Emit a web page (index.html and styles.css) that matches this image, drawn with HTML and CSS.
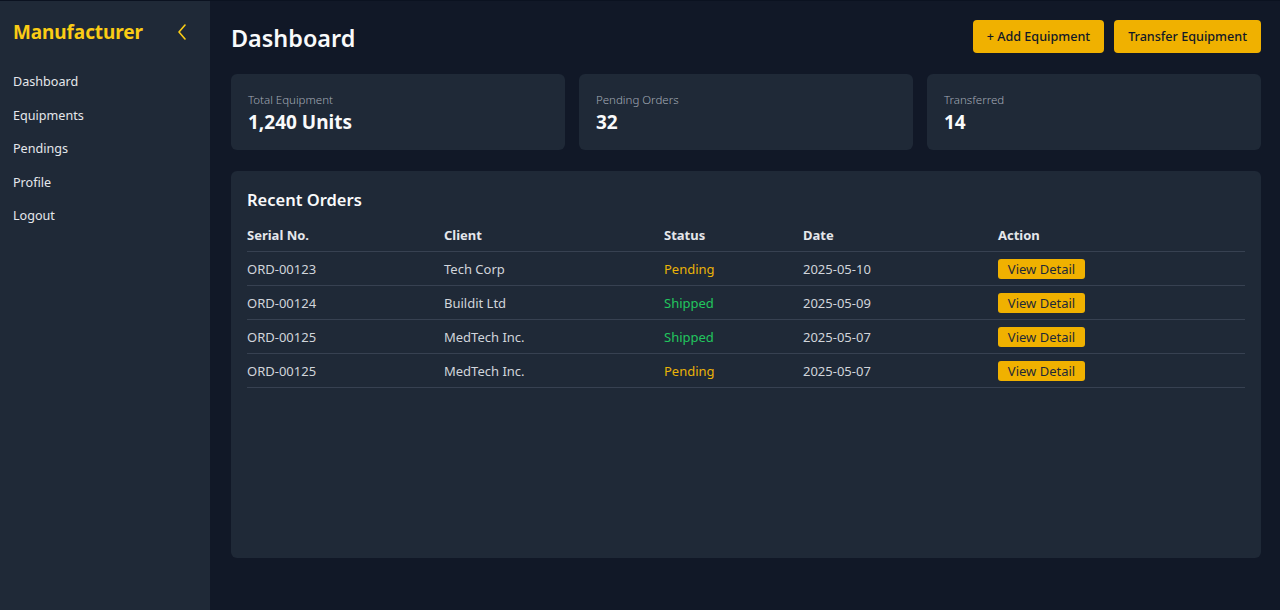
FILE: index.html
```html
<!DOCTYPE html>
<html lang="en">
<head>
<meta charset="utf-8">
<title>Manufacturer Dashboard</title>
<link rel="stylesheet" href="styles.css">
</head>
<body>
<div class="app">
  <aside class="sidebar">
    <div class="brand">
      <span class="brand-name">Manufacturer</span>
      <svg class="collapse" width="10" height="16" viewBox="0 0 10 16" fill="none" stroke="#facc15" stroke-width="1.6" stroke-linecap="round" stroke-linejoin="round"><path d="M8 1 L2 8 L8 15"/></svg>
    </div>
    <nav class="nav">
      <a class="nav-item">Dashboard</a>
      <a class="nav-item">Equipments</a>
      <a class="nav-item">Pendings</a>
      <a class="nav-item">Profile</a>
      <a class="nav-item">Logout</a>
    </nav>
  </aside>
  <main class="main">
    <header class="topbar">
      <h1 class="title">Dashboard</h1>
      <div class="actions">
        <button class="btn">+ Add Equipment</button>
        <button class="btn">Transfer Equipment</button>
      </div>
    </header>
    <section class="stats">
      <div class="card">
        <div class="card-label">Total Equipment</div>
        <div class="card-value">1,240 Units</div>
      </div>
      <div class="card">
        <div class="card-label">Pending Orders</div>
        <div class="card-value">32</div>
      </div>
      <div class="card">
        <div class="card-label">Transferred</div>
        <div class="card-value">14</div>
      </div>
    </section>
    <section class="panel">
      <h2 class="panel-title">Recent Orders</h2>
      <table class="orders">
        <thead>
          <tr><th class="c1">Serial No.</th><th class="c2">Client</th><th class="c3">Status</th><th class="c4">Date</th><th class="c5">Action</th></tr>
        </thead>
        <tbody>
          <tr><td>ORD-00123</td><td>Tech Corp</td><td class="pending">Pending</td><td>2025-05-10</td><td><button class="view">View Detail</button></td></tr>
          <tr><td>ORD-00124</td><td>Buildit Ltd</td><td class="shipped">Shipped</td><td>2025-05-09</td><td><button class="view">View Detail</button></td></tr>
          <tr><td>ORD-00125</td><td>MedTech Inc.</td><td class="shipped">Shipped</td><td>2025-05-07</td><td><button class="view">View Detail</button></td></tr>
          <tr><td>ORD-00125</td><td>MedTech Inc.</td><td class="pending">Pending</td><td>2025-05-07</td><td><button class="view">View Detail</button></td></tr>
        </tbody>
      </table>
    </section>
  </main>
</div>
</body>
</html>
```
FILE: styles.css
```css
* { box-sizing: border-box; }
html, body { margin: 0; padding: 0; height: 100%; }
body {
  font-family: "Noto Sans", "Open Sans", sans-serif;
  background: #111827;
  color: #e5e7eb;
}
.app {
  display: flex;
  height: 610px;
  border-top: 1px solid #0b1220;
}
.sidebar {
  width: 210px;
  flex-shrink: 0;
  background: #1f2937;
  padding: 18px 13px;
}
.brand {
  display: flex;
  align-items: center;
  justify-content: space-between;
  padding-right: 10px;
  height: 26px;
}
.brand-name {
  color: #facc15;
  font-size: 19px;
  font-weight: 700;
  letter-spacing: -0.1px;
}
.collapse { display: block; }
.nav {
  display: flex;
  flex-direction: column;
  margin-top: 27px;
  gap: 14.5px;
}
.nav-item {
  color: #e5e7eb;
  font-size: 12.6px;
  line-height: 19px;
}
.main {
  flex: 1;
  padding: 19px 19px 0 21px;
  display: flex;
  flex-direction: column;
}
.topbar {
  display: flex;
  justify-content: space-between;
  align-items: flex-start;
  height: 54px;
}
.title {
  margin: 2px 0 0;
  font-size: 23.4px;
  font-weight: 600;
  color: #f9fafb;
  line-height: 32px;
}
.actions { display: flex; gap: 10px; }
.btn {
  font-family: inherit;
  background: #f0b100;
  color: #111827;
  border: none;
  border-radius: 4px;
  height: 33px;
  padding: 0 14px;
  font-size: 12.6px;
  font-weight: 500;
}
.stats {
  display: grid;
  grid-template-columns: repeat(3, 1fr);
  gap: 14px;
}
.card {
  background: #1f2937;
  border-radius: 6px;
  height: 76px;
  padding: 18px 17px 0;
}
.card-label {
  font-size: 11.5px;
  font-weight: 300;
  color: #a3aab6;
  line-height: 16px;
}
.card-value {
  margin-top: 1px;
  font-size: 19px;
  font-weight: 700;
  color: #f9fafb;
  line-height: 26px;
}
.panel {
  margin-top: 21px;
  background: #1f2937;
  border-radius: 6px;
  height: 387px;
  padding: 17px 16px;
}
.panel-title {
  margin: 0 0 10px;
  font-size: 16.5px;
  font-weight: 600;
  color: #f9fafb;
  line-height: 24px;
}
.orders {
  width: 100%;
  border-collapse: collapse;
  font-size: 13px;
}
.orders th {
  text-align: left;
  font-weight: 700;
  color: #e5e7eb;
  padding: 4px 0 0;
  height: 29px;
  vertical-align: top;
  line-height: 18px;
  border-bottom: 1px solid #374151;
}
.orders td {
  padding: 2px 0 0;
  height: 34px;
  color: #d1d5db;
  border-bottom: 1px solid #374151;
  vertical-align: middle;
}
.c1 { width: 197px; }
.c2 { width: 220px; }
.c3 { width: 139px; }
.c4 { width: 195px; }
.pending { color: #eab308 !important; }
.shipped { color: #22c55e !important; }
.view {
  font-family: inherit;
  background: #f0b100;
  color: #1f2937;
  border: none;
  border-radius: 3px;
  height: 20px;
  width: 87px;
  padding: 0;
  font-size: 13px;
  line-height: 20px;
}
```
